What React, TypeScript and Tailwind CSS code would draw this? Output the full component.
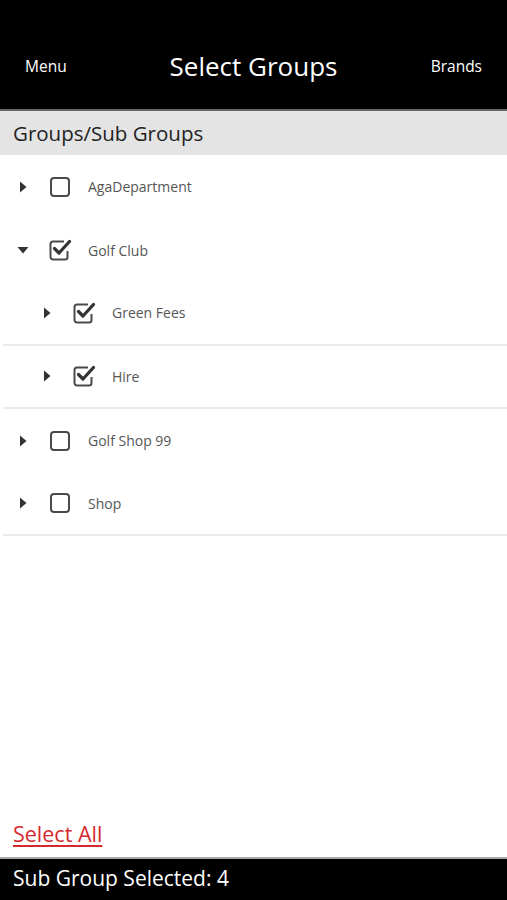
import React from "react";

const font = { fontFamily: "'Open Sans', Lato, sans-serif" };

function Right() {
  return (
    <svg width="8" height="12" viewBox="0 0 8 12">
      <path d="M1 0.5 L7.5 6 L1 11.5 Z" fill="#333" />
    </svg>
  );
}
function Down() {
  return (
    <svg width="12" height="8" viewBox="0 0 12 8">
      <path d="M0.5 1 L11.5 1 L6 7.5 Z" fill="#333" />
    </svg>
  );
}
function Box({ checked }: { checked: boolean }) {
  return (
    <svg width="24" height="24" viewBox="0 0 24 24">
      {checked ? (
        <>
          <path
            d="M16 3.5 H5 A2.5 2.5 0 0 0 2.5 6 V19 A2.5 2.5 0 0 0 5 21.5 H17 A2.5 2.5 0 0 0 19.5 19 V13"
            fill="none"
            stroke="#4a4a4a"
            strokeWidth="2"
          />
          <path d="M6.5 10.5 L11 15 L21.5 3.5" fill="none" stroke="#333" strokeWidth="3.2" strokeLinecap="round" strokeLinejoin="round" />
        </>
      ) : (
        <rect x="3" y="3" width="18" height="18" rx="3" fill="none" stroke="#4a4a4a" strokeWidth="2" />
      )}
    </svg>
  );
}

type Row = { label: string; level: number; expanded?: boolean; checked: boolean; sep: boolean };
const rows: Row[] = [
  { label: "AgaDepartment", level: 0, checked: false, sep: false },
  { label: "Golf Club", level: 0, expanded: true, checked: true, sep: false },
  { label: "Green Fees", level: 1, checked: true, sep: true },
  { label: "Hire", level: 1, checked: true, sep: true },
  { label: "Golf Shop 99", level: 0, checked: false, sep: false },
  { label: "Shop", level: 0, checked: false, sep: true },
];

export default function App() {
  return (
    <div className="w-[507px] h-[900px] flex flex-col bg-white overflow-hidden" style={font}>
      <div className="h-[111px] bg-black flex items-center pt-[24px] px-[25px] border-b-2 border-[#666]">
        <div className="flex-1 text-white text-[15.5px]">Menu</div>
        <div className="text-white text-[26px]">Select Groups</div>
        <div className="flex-1 text-right text-white text-[15.5px]">Brands</div>
      </div>
      <div className="h-[44px] bg-[#e4e4e4] flex items-center px-[13px] text-[20.5px] text-[#222]">Groups/Sub Groups</div>
      <div className="flex flex-col">
        {rows.map((r) => (
          <div
            key={r.label}
            className={`h-[63.5px] flex items-center ml-[3px] ${r.sep ? "border-b-2 border-[#ebebeb]" : ""} ${r.level ? "pl-[37px]" : "pl-[13px]"}`}
          >
            <div className="w-[14px] flex justify-center">{r.expanded ? <Down /> : <Right />}</div>
            <div className="ml-[18px] w-[24px] h-[24px] flex">
              <Box checked={r.checked} />
            </div>
            <div className="ml-[16px] text-[14px] text-[#555]">{r.label}</div>
          </div>
        ))}
      </div>
      <div className="flex-1" />
      <div className="px-[13px] pb-[7px]">
        <span className="text-[21.5px] text-[#d42a2f] underline underline-offset-[3px]">Select All</span>
      </div>
      <div className="h-[43px] bg-black border-t-2 border-[#aaa] flex items-center pb-[2px] px-[13px] text-white text-[21px]">
        Sub Group Selected: 4
      </div>
    </div>
  );
}
